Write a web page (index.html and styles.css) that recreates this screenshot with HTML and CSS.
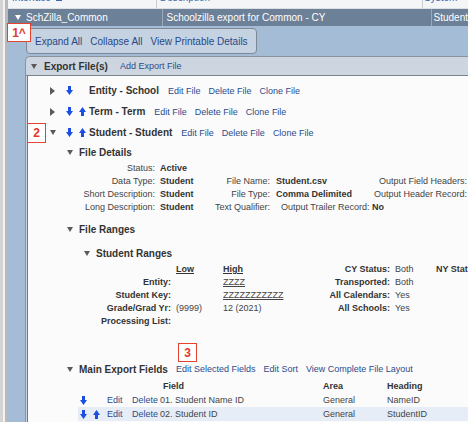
FILE: index.html
```html
<!DOCTYPE html>
<html>
<head>
<meta charset="utf-8">
<title>Interface - SchZilla_Common</title>
<link rel="stylesheet" href="styles.css">
</head>
<body>
<div class="page">
  <div class="top">
    <div class="tc c1"><span class="cut">Interface <i class="ico"></i></span></div>
    <div class="tc c2"><span class="cut">Description</span></div>
    <div class="tc c3"><span class="cut">System</span></div>
  </div>
  <div class="iface">
    <div class="ic c1"><span class="tri-w"></span>SchZilla_Common</div>
    <div class="ic c2">Schoolzilla export for Common - CY</div>
    <div class="ic c3">Student</div>
  </div>

  <div class="blue">
    <div class="toolbar">
      <a href="#">Expand All</a>
      <a href="#">Collapse All</a>
      <a href="#">View Printable Details</a>
    </div>

    <div class="panel">
      <div class="panel-head"><span class="tri down"></span><b>Export File(s)</b><a href="#">Add Export File</a></div>
      <div class="panel-body">

        <div class="file">
          <span class="tslot"><span class="tri right"></span></span>
          <span class="dn"><svg class="arr" viewBox="0 0 7 9" width="7" height="9"><path d="M2 0h3v4h2L3.5 9 0 4h2z"/></svg></span>
          <span class="up"></span>
          <b>Entity - School</b>
          <a href="#">Edit File</a><a href="#">Delete File</a><a href="#">Clone File</a>
        </div>
        <div class="file">
          <span class="tslot"><span class="tri right"></span></span>
          <span class="dn"><svg class="arr" viewBox="0 0 7 9" width="7" height="9"><path d="M2 0h3v4h2L3.5 9 0 4h2z"/></svg></span>
          <span class="up"><svg class="arr" viewBox="0 0 7 9" width="7" height="9"><path d="M3.5 0L7 5H5v4H2V5H0z"/></svg></span>
          <b>Term - Term</b>
          <a href="#">Edit File</a><a href="#">Delete File</a><a href="#">Clone File</a>
        </div>
        <div class="file">
          <span class="tslot"><span class="tri down"></span></span>
          <span class="dn"><svg class="arr" viewBox="0 0 7 9" width="7" height="9"><path d="M2 0h3v4h2L3.5 9 0 4h2z"/></svg></span>
          <span class="up"><svg class="arr" viewBox="0 0 7 9" width="7" height="9"><path d="M3.5 0L7 5H5v4H2V5H0z"/></svg></span>
          <b>Student - Student</b>
          <a href="#">Edit File</a><a href="#">Delete File</a><a href="#">Clone File</a>
        </div>

        <div class="sec"><span class="tri down"></span>File Details</div>
        <div class="details">
          <span class="r">Status:</span><span class="v">Active</span><span></span><span></span><span></span><span></span>
          <span class="r">Data Type:</span><span class="v">Student</span><span class="r">File Name:</span><span class="v v2">Student.csv</span><span class="r">Output Field Headers:</span><span class="v">Yes</span>
          <span class="r">Short Description:</span><span class="v">Student</span><span class="r">File Type:</span><span class="v v2">Comma Delimited</span><span class="r">Output Header Record:</span><span class="v">No</span>
          <span class="r">Long Description:</span><span class="v">Student</span><span class="r">Text Qualifier:</span><span class="trail">Output Trailer Record: <b>No</b></span><span></span>
        </div>

        <div class="sec sp"><span class="tri down"></span>File Ranges</div>
        <div class="sec sub sp"><span class="tri down"></span>Student Ranges</div>
        <div class="ranges">
          <span></span><span class="lo"><b class="u">Low</b></span><span><b class="u">High</b></span><b class="r">CY Status:</b><span class="val">Both</span><b>NY Status:</b>
          <b class="r">Entity:</b><span class="lo"></span><span class="u">ZZZZ</span><b class="r">Transported:</b><span class="val">Both</span><span></span>
          <b class="r">Student Key:</b><span class="lo"></span><span class="u">ZZZZZZZZZZZ</span><b class="r">All Calendars:</b><span class="val">Yes</span><span></span>
          <b class="r">Grade/Grad Yr:</b><span class="lo">(9999)</span><span>12 (2021)</span><b class="r">All Schools:</b><span class="val">Yes</span><span></span>
          <b class="r">Processing List:</b><span class="lo"></span><span></span><span></span><span></span><span></span>
        </div>

        <div class="sec main"><span class="tri down"></span>Main Export Fields<a href="#">Edit Selected Fields</a><a href="#">Edit Sort</a><a href="#">View Complete File Layout</a></div>
        <div class="frow head">
          <span></span><span></span><span></span><b class="fld">Field</b><b>Area</b><b>Heading</b>
        </div>
        <div class="frow">
          <span class="arrs"><svg class="arr" viewBox="0 0 7 9" width="7" height="9"><path d="M2 0h3v4h2L3.5 9 0 4h2z"/></svg></span>
          <a href="#">Edit</a><a href="#">Delete</a><span>01. Student Name ID</span><span>General</span><span>NameID</span>
        </div>
        <div class="frow hl">
          <span class="arrs"><svg class="arr" viewBox="0 0 7 9" width="7" height="9"><path d="M2 0h3v4h2L3.5 9 0 4h2z"/></svg><svg class="arr" viewBox="0 0 7 9" width="7" height="9"><path d="M3.5 0L7 5H5v4H2V5H0z"/></svg></span>
          <a href="#">Edit</a><a href="#">Delete</a><span>02. Student ID</span><span>General</span><span>StudentID</span>
        </div>

      </div>
    </div>
  </div>
</div>

<span class="badge b1">1^</span>
<span class="badge b2">2</span>
<span class="badge b3">3</span>
</body>
</html>
```

FILE: styles.css
```css
body { margin: 0; overflow: hidden; background: #fff; font: 9px "Liberation Sans", Arial, sans-serif; color: #444; position: relative; width: 468px; height: 422px; }
a { color: #2b4c8c; text-decoration: none; }
b { color: #333; }

/* left gutter of the outer frame */
.page { padding-left: 8px; min-height: 422px; box-shadow: inset 3px 0 #d4d4d4, inset 5px 0 #f2f2f2, inset 8px 0 #b9b9b9; }

/* grid header row, mostly scrolled away */
.top { display: flex; height: 8px; overflow: hidden; background: #f4f5f7; border-bottom: 1px solid #dcdfe3; }
.c1 { width: 148px; }
.c2 { width: 265px; border-left: 1px solid #c9ced5; }
.c3 { flex: 1; border-left: 1px solid #c9ced5; }
.cut { display: block; margin-top: -7px; line-height: 10px; font-size: 10px; color: #3c68ad; white-space: nowrap; }
.c1 .cut { padding-left: 4px; }
.c2 .cut { padding-left: 3px; }
.c3 .cut { padding-left: 1px; }
.ico { display: inline-block; width: 6px; height: 6px; background: #3c68ad; margin-left: 2px; }

/* selected interface row */
.iface { display: flex; height: 17px; line-height: 17px; background: #6c8098; color: #fff; font-size: 10px; white-space: nowrap; }
.iface .c2, .iface .c3 { border-left-color: #9aa8b8; }
.iface .c1 { padding-left: 7px; }
.iface .c2 { padding-left: 3px; }
.iface .c3 { padding-left: 2px; }
.tri-w { display: inline-block; vertical-align: middle; margin: -2px 5px 0 0; border-left: 3px solid transparent; border-right: 3px solid transparent; border-top: 5px solid #fff; }

.blue { background: #a4bcd6; padding: 2px 0 0 17px; }

.toolbar { box-sizing: border-box; margin-left: 1px; width: 231px; height: 26px; border: 1px solid #7e8894; border-radius: 4px; background: #c4d2e2; display: flex; align-items: center; gap: 8px; padding-left: 8px; font-size: 10px; white-space: nowrap; }
.toolbar a { color: #284985; }

.panel { margin-top: 2px; border-top: 1px solid #8a929b; border-left: 1px solid #8a929b; border-top-left-radius: 5px; background: #cdd6e0; }
.panel-head { height: 18px; display: flex; align-items: center; padding-left: 5px; border-bottom: 1px solid #7b838c; white-space: nowrap; }
.panel-head .tri { margin-right: 7px; }
.panel-head b { font-size: 10px; }
.panel-head a { margin-left: 12px; }
.panel-body { margin-left: 1px; border-left: 1px solid #6f7780; background: #fbfbfb; padding-top: 4px; height: 350px; white-space: nowrap; }

.tri { display: inline-block; }
.tri.right { border-top: 4px solid transparent; border-bottom: 4px solid transparent; border-left: 5px solid #5a5a5a; }
.tri.down { border-left: 3.5px solid transparent; border-right: 3.5px solid transparent; border-top: 5px solid #5a5a5a; }

.arr { display: block; fill: #1b4fe3; }

/* export file rows */
.file { display: flex; align-items: center; height: 21px; padding-left: 22px; }
.tslot { width: 16px; display: flex; align-items: center; }
.dn { width: 13px; }
.up { width: 10px; }
.file b { font-size: 10px; margin-right: 1px; }
.file a { margin-left: 8px; }

/* section headings */
.sec { display: flex; align-items: center; height: 19px; padding-left: 39px; font-weight: bold; font-size: 10px; color: #333; }
.sec .tri { margin-right: 6px; }
.sec.sp { height: 18px; margin-top: 6px; }
.sec.sub { padding-left: 56px; }
.sec.main { height: 20px; margin-top: 31px; }
.sec a { font-weight: normal; font-size: 9px; margin-left: 8px; }

.details { margin-left: 51px; display: grid; grid-template-columns: 77px 58px 57px 101px 96px 80px; grid-auto-rows: 13px; line-height: 13px; }
.r { text-align: right; padding-right: 1px; }
.v { padding-left: 4px; font-weight: bold; color: #333; }
.v2 { padding-left: 5px; }
.trail { grid-column: span 2; padding-left: 10px; }

.ranges { margin: 1px 0 0 51px; display: grid; grid-template-columns: 93px 51px 66px 102px 45px 80px; grid-auto-rows: 13px; line-height: 13px; }
.lo { padding-left: 4px; }
.val { padding-left: 4px; }
.u { text-decoration: underline; }

/* main export fields */
.frow { margin-left: 50px; display: grid; grid-template-columns: 29px 25px 28px 163px 64px 1fr; height: 14px; align-items: center; }
.frow.hl { background: #e6edf6; }
.fld { padding-left: 3px; }
.arrs { display: flex; gap: 6px; padding-left: 2px; }

.badge { position: absolute; box-sizing: border-box; background: #fff; border: 1.5px solid #e4432f; color: #e0392a; font: bold 12px "Liberation Sans", Arial, sans-serif; display: flex; align-items: center; justify-content: center; }
.b1 { left: 7px; top: 23px; width: 24px; height: 19px; }
.b2 { left: 27px; top: 123px; width: 19px; height: 20px; }
.b3 { left: 178px; top: 343px; width: 19px; height: 19px; }
```
